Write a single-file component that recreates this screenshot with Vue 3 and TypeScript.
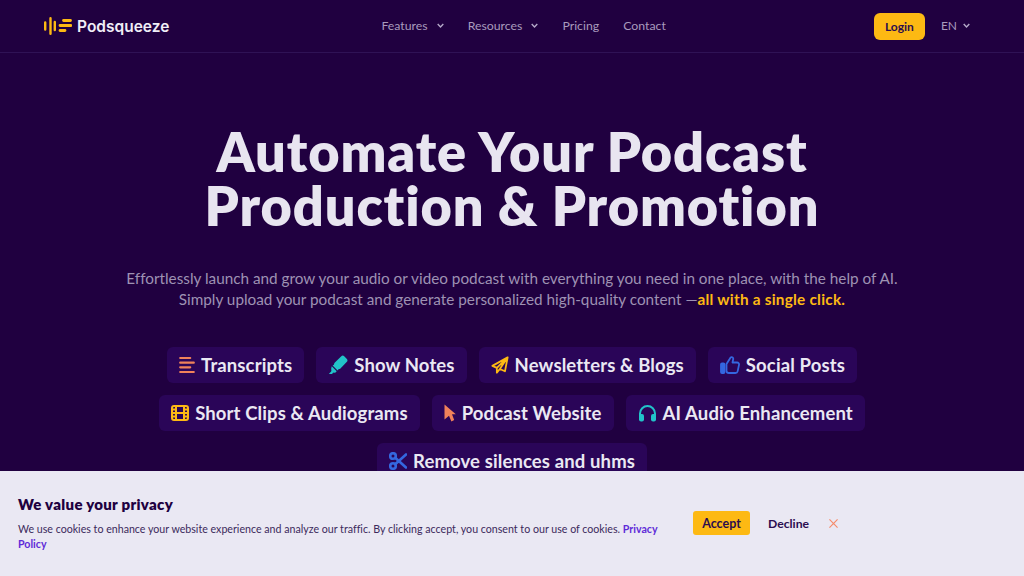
<script setup lang="ts">
</script>

<template>
  <div class="page">
    <header class="topbar">
      <a class="brand">
        <svg class="brand-mark" width="28" height="18" viewBox="0 0 28 18" fill="none" stroke="#fdb913" stroke-linecap="round">
          <path d="M1.200 5.500v7M6.500 1.200v15.600M10.800 5v8" stroke-width="2.400" />
          <path d="M19.500 3.500h7M16 8.500h11M16 13.500h5" stroke-width="2.800" />
        </svg>
        <span>Podsqueeze</span>
      </a>
      <nav class="nav">
        <a>Features<svg class="caret" viewBox="0 0 10 6"><path d="M1 1l4 4 4-4" /></svg></a>
        <a>Resources<svg class="caret" viewBox="0 0 10 6"><path d="M1 1l4 4 4-4" /></svg></a>
        <a>Pricing</a>
        <a>Contact</a>
      </nav>
      <div class="actions">
        <button class="login">Login</button>
        <span class="lang">EN<svg class="caret small" viewBox="0 0 10 6"><path d="M1 1l4 4 4-4" /></svg></span>
      </div>
    </header>

    <main class="hero">
      <h1>Automate Your Podcast<br />Production &amp; Promotion</h1>
      <p class="lead">
        Effortlessly launch and grow your audio or video podcast with everything you need in one place, with the help of AI.<br />
        Simply upload your podcast and generate personalized high-quality content —<strong>all with a single click.</strong>
      </p>
      <div class="chips">
        <div class="chip">
          <svg width="16" height="18" viewBox="0 0 16 18" fill="none" stroke="#f0825a" stroke-width="2.200" stroke-linecap="round"><path d="M1.200 2h10M1.200 6.700h13.600M1.200 11.300h10M1.200 16h13.600" /></svg>
          Transcripts
        </div>
        <div class="chip">
          <svg width="20" height="20" viewBox="0 0 20 20" fill="#22c3c9"><path d="M13.300 1.200c.9-.8 2-.8 2.900 0l2.700 2.700c.8.900.8 2 0 2.900l-6.700 7-1.700.5-.9 1.300-5-5 1.300-.9.500-1.700zM3.700 11.200l5 5-1.500 1.500-3.400-.2-.3-.3-.3-3.400z" /><path d="M.8 19l2.800-3.100 1.700 1.700L4 19z" /></svg>
          Show Notes
        </div>
        <div class="chip">
          <svg width="18" height="18" viewBox="0 0 20 20" fill="none" stroke="#fdb913" stroke-width="2" stroke-linejoin="round"><path d="M18.500 1.500L1.500 11l5 2.200zM18.500 1.500L6.500 13.200V18.500l3.300-4zM18.500 1.500L15.500 17l-5.700-2.500" /></svg>
          Newsletters &amp; Blogs
        </div>
        <div class="chip">
          <svg width="20" height="20" viewBox="0 0 20 20" fill="none" stroke="#3467e0" stroke-width="1.800" stroke-linejoin="round"><rect x="1" y="8.500" width="3.500" height="9.500" rx="1" fill="#3467e0" /><path d="M6.500 9l3.800-6c.3-1.300 2.800-1.300 3 .8l-.8 3.700H17c1.500 0 2.300 1.200 2 2.400l-1.300 6.200c-.3 1.200-1.100 1.900-2.300 1.900H9c-1.400 0-2.500-1-2.500-2.300z" /></svg>
          Social Posts
        </div>
        <div class="chip">
          <svg width="18" height="16" viewBox="0 0 18 16" fill="none" stroke="#fdb913" stroke-width="2"><rect x="1" y="1" width="16" height="14" rx="2" /><path d="M5 1v14M13 1v14M5 8h8M1 4.500h4M1 8h4M1 11.500h4M13 4.500h4M13 8h4M13 11.500h4" /></svg>
          Short Clips &amp; Audiograms
        </div>
        <div class="chip">
          <svg width="12" height="18" viewBox="0 0 12 18" fill="#f0825a"><path d="M0.500 0.500L11.800 10.200H8l2.200 5.800-2.800 1.500L5 11.800 0.500 15.500z" /></svg>
          Podcast Website
        </div>
        <div class="chip">
          <svg width="19" height="18" viewBox="0 0 19 18" fill="none"><path d="M2 12V9.500a7.500 7.500 0 0115 0V12" stroke="#22c3c9" stroke-width="2" /><rect x="1" y="10" width="5" height="7.500" rx="2" fill="#22c3c9" /><rect x="13" y="10" width="5" height="7.500" rx="2" fill="#22c3c9" /></svg>
          AI Audio Enhancement
        </div>
        <div class="chip">
          <svg width="18" height="18" viewBox="0 0 18 18" fill="none" stroke="#3467e0" stroke-width="2.600"><circle cx="4" cy="4" r="2.800" /><circle cx="4" cy="14" r="2.800" /><path d="M6.200 5.800L17 15.500M6.200 12.200L17 2.500" stroke-linecap="round" /></svg>
          Remove silences and uhms
        </div>
      </div>
    </main>

    <aside class="cookie">
      <div class="cookie-copy">
        <h2>We value your privacy</h2>
        <p>We use cookies to enhance your website experience and analyze our traffic. By clicking accept, you consent to our use of cookies. <a>Privacy Policy</a></p>
      </div>
      <div class="cookie-actions">
        <button class="accept">Accept</button>
        <button class="decline">Decline</button>
        <svg class="close" width="9" height="9" viewBox="0 0 10 10" stroke="#f58b6b" stroke-width="1.300" fill="none"><path d="M.5.500l9 9M9.500.500l-9 9" /></svg>
      </div>
    </aside>
  </div>
</template>

<style>
html, body { margin: 0; background: #200040; }
</style>

<style scoped>
.page {
  height: 576px;
  overflow: hidden;
  background: #200040;
  font-family: Lato, "Noto Sans", sans-serif;
  font-variant-ligatures: none;
  color: #eae8f3;
}
.topbar {
  display: flex;
  align-items: center;
  height: 52px;
  padding: 0 44px;
  border-bottom: 1px solid #2f1255;
}
.brand {
  display: flex;
  align-items: center;
  gap: 5px;
  font-family: Inter, sans-serif;
  font-size: 15.500px;
  font-weight: 600;
  color: #f0eef7;
}
.nav {
  display: flex;
  gap: 24px;
  margin: 0 0 2px 212px;
  font-size: 12.300px;
  color: #a89bbd;
}
.nav a { display: flex; align-items: center; }
.caret {
  width: 7px;
  height: 5px;
  margin-left: 9px;
  fill: none;
  stroke: #b5a9c9;
  stroke-width: 2;
}
.caret.small { width: 7px; height: 5px; margin-left: 6px; }
.actions {
  display: flex;
  margin-left: auto;
  align-items: center;
  gap: 16px;
  padding-right: 10px;
}
.login {
  width: 51px;
  height: 27px;
  border: 0;
  border-radius: 6px;
  background: #fdb913;
  color: #2b0d4f;
  font: 700 12px Lato, sans-serif;
  padding: 0;
}
.lang { display: flex; align-items: center; margin-bottom: 2px; font-size: 12px; color: #a89bbd; }
.hero {
  display: flex;
  flex-direction: column;
  align-items: center;
  padding-top: 72px;
}
h1 {
  margin: 0;
  font-size: 54px;
  line-height: 54px;
  font-weight: 800;
  text-align: center;
  letter-spacing: 0.900px;
  color: #e8e5f0;
}
.lead {
  margin: 35px 0 0;
  font-size: 15.300px;
  line-height: 21px;
  text-align: center;
  color: #9e92b3;
}
.lead strong { color: #fdb913; font-weight: 700; letter-spacing: 0.250px; }
.chips {
  display: flex;
  flex-wrap: wrap;
  justify-content: center;
  gap: 12px;
  width: 720px;
  margin-top: 37px;
}
.chip {
  display: flex;
  align-items: center;
  gap: 6px;
  height: 36px;
  padding: 0 12px;
  border-radius: 6px;
  background: #2a0558;
  font-size: 18.500px;
  font-weight: 700;
  letter-spacing: 0.120px;
  color: #eae8f3;
}
.cookie {
  position: fixed;
  left: 0;
  right: 0;
  bottom: 0;
  height: 105px;
  display: flex;
  background: #eae8f3;
  color: #3c2a5c;
  box-sizing: border-box;
  padding: 23px 18px 0;
}
.cookie-copy { width: 650px; }
.cookie h2 {
  margin: 0;
  font-size: 15px;
  line-height: 20px;
  font-weight: 800;
  letter-spacing: 0.300px;
  color: #200040;
}
.cookie p {
  margin: 7px 0 0;
  font-size: 10.650px;
  line-height: 15px;
}
.cookie p a { color: #5f2bd8; font-weight: 700; }
.cookie-actions {
  display: flex;
  align-items: center;
  align-self: flex-start;
  margin: 17px 0 0 25px;
  height: 24px;
}
.accept {
  width: 57px;
  height: 24px;
  border: 0;
  padding: 0;
  border-radius: 3px;
  background: #fdb913;
  color: #2b0d4f;
  font: 700 12.500px Lato, sans-serif;
}
.decline {
  border: 0;
  background: none;
  padding: 0;
  margin-left: 18px;
  color: #2b0d4f;
  font: 700 12.200px Lato, sans-serif;
}
.close { margin-left: 20px; }
</style>
